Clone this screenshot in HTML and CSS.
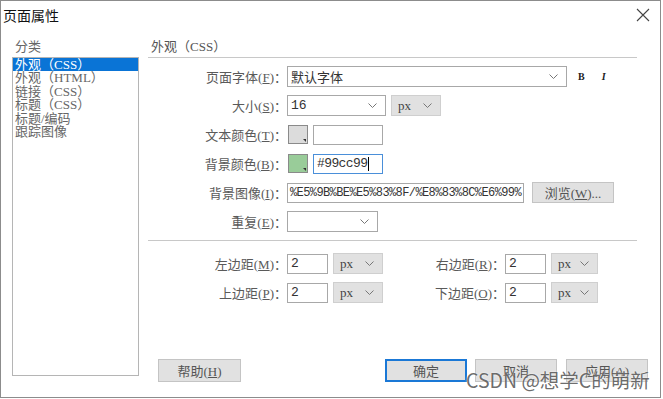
FILE: index.html
```html
<!DOCTYPE html>
<html lang="zh-CN">
<head>
    <meta charset="UTF-8">
    <meta name="viewport" content="width=device-width, initial-scale=1.0">
    <title>页面属性</title>
    <link rel="stylesheet" href="styles.css">
</head>
<body>
    <div class="dialog">
        <div class="titlebar">
            <span class="title">页面属性</span>
            <svg class="close" width="14" height="14" viewBox="0 0 14 14">
                <path d="M1 1 L13 13 M13 1 L1 13" stroke="#444" stroke-width="1.1" fill="none"/>
            </svg>
        </div>
        <div class="content">
            <div class="sidebar">
                <div class="side-title">分类</div>
                <ul class="category-list">
                    <li class="selected">外观（CSS）</li>
                    <li>外观（HTML）</li>
                    <li>链接（CSS）</li>
                    <li>标题（CSS）</li>
                    <li>标题/编码</li>
                    <li>跟踪图像</li>
                </ul>
            </div>
            <div class="main">
                <div class="section-title">外观（CSS）</div>
                <div class="form">
                    <div class="row">
                        <span class="label">页面字体(<u>F</u>)：</span>
                        <div class="select font-select">默认字体<svg class="chev" width="9" height="5"><polyline points="0.5,0.5 4.5,4.5 8.5,0.5" stroke="#777" fill="none"/></svg></div>
                        <span class="fmt fmt-b">B</span>
                        <span class="fmt fmt-i">I</span>
                    </div>
                    <div class="row">
                        <span class="label">大小(<u>S</u>)：</span>
                        <div class="select size-select">16<svg class="chev" width="9" height="5"><polyline points="0.5,0.5 4.5,4.5 8.5,0.5" stroke="#777" fill="none"/></svg></div>
                        <div class="unit">px<svg class="chev" width="9" height="5"><polyline points="0.5,0.5 4.5,4.5 8.5,0.5" stroke="#777" fill="none"/></svg></div>
                    </div>
                    <div class="row">
                        <span class="label">文本颜色(<u>T</u>)：</span>
                        <span class="swatch"></span>
                        <div class="input color-input"></div>
                    </div>
                    <div class="row">
                        <span class="label">背景颜色(<u>B</u>)：</span>
                        <span class="swatch green"></span>
                        <div class="input color-input focused">#99cc99<span class="caret"></span></div>
                    </div>
                    <div class="row">
                        <span class="label">背景图像(<u>I</u>)：</span>
                        <div class="input image-input">%E5%9B%BE%E5%83%8F/%E8%83%8C%E6%99%</div>
                        <button class="btn browse-btn">浏览(<u>W</u>)...</button>
                    </div>
                    <div class="row">
                        <span class="label">重复(<u>E</u>)：</span>
                        <div class="select repeat-select"><svg class="chev" width="9" height="5"><polyline points="0.5,0.5 4.5,4.5 8.5,0.5" stroke="#777" fill="none"/></svg></div>
                    </div>
                </div>
                <div class="divider"></div>
                <div class="margins">
                    <div class="row">
                        <span class="label">左边距(<u>M</u>)：</span>
                        <div class="input margin-input">2</div>
                        <div class="unit">px<svg class="chev" width="9" height="5"><polyline points="0.5,0.5 4.5,4.5 8.5,0.5" stroke="#777" fill="none"/></svg></div>
                        <span class="label label-right">右边距(<u>R</u>)：</span>
                        <div class="input margin-input">2</div>
                        <div class="unit unit-narrow">px<svg class="chev" width="9" height="5"><polyline points="0.5,0.5 4.5,4.5 8.5,0.5" stroke="#777" fill="none"/></svg></div>
                    </div>
                    <div class="row">
                        <span class="label">上边距(<u>P</u>)：</span>
                        <div class="input margin-input">2</div>
                        <div class="unit">px<svg class="chev" width="9" height="5"><polyline points="0.5,0.5 4.5,4.5 8.5,0.5" stroke="#777" fill="none"/></svg></div>
                        <span class="label label-right">下边距(<u>O</u>)：</span>
                        <div class="input margin-input">2</div>
                        <div class="unit unit-narrow">px<svg class="chev" width="9" height="5"><polyline points="0.5,0.5 4.5,4.5 8.5,0.5" stroke="#777" fill="none"/></svg></div>
                    </div>
                </div>
                <div class="buttons">
                    <button class="btn">帮助(<u>H</u>)</button>
                    <div class="button-group">
                        <button class="btn btn-default">确定</button>
                        <button class="btn">取消</button>
                        <button class="btn">应用(<u>A</u>)</button>
                    </div>
                </div>
            </div>
        </div>
        <div class="watermark">CSDN @想学C的萌新</div>
    </div>
</body>
</html>
```

FILE: styles.css
```css
body {
    margin: 0;
    padding: 0;
    background-color: #fff;
    font-family: "Liberation Serif", "Noto Sans CJK SC", serif;
    font-size: 13px;
    color: #555;
}

.dialog {
    position: relative;
    width: 661px;
    height: 398px;
    border: 1px solid #8c8c8c;
    box-sizing: border-box;
    background: #fff;
}

.titlebar {
    display: flex;
    justify-content: space-between;
    height: 33px;
}

.title {
    padding-left: 2px;
    font-family: "Noto Sans CJK SC", sans-serif;
    font-size: 14px;
    line-height: 28px;
    color: #111;
}

.close {
    margin: 7px 10px 0 0;
}

.content {
    display: flex;
    padding: 4px 0 0 11px;
}

.sidebar {
    width: 127px;
    margin-right: 9px;
}

.side-title {
    padding-left: 3px;
    line-height: 17px;
    margin-bottom: 2px;
    color: #666;
}

.category-list {
    list-style: none;
    margin: 0;
    padding: 0;
    height: 319px;
    border: 1px solid #b5b5b5;
    box-sizing: border-box;
}

.category-list li {
    padding-left: 2px;
    line-height: 13.4px;
    color: #666;
}

.category-list li.selected {
    background-color: #0a74d6;
    color: #fff;
}

.main {
    width: 500px;
}

.section-title {
    margin-right: 11px;
    padding: 0 0 2px 3px;
    line-height: 17px;
    border-bottom: 1px solid #c8c8c8;
}

.form {
    padding-top: 8px;
}

.row {
    display: flex;
    align-items: center;
    height: 21px;
    margin-bottom: 8px;
}

.label {
    width: 139px;
    text-align: right;
    color: #5a5a5a;
    flex-shrink: 0;
}

.label-right {
    width: 122px;
}

.select,
.input {
    display: flex;
    align-items: center;
    justify-content: space-between;
    height: 21px;
    padding: 0 8px 0 3px;
    border: 1px solid #a8a8a8;
    box-sizing: border-box;
    background: #fff;
    color: #333;
    font-family: "Liberation Mono", "Noto Sans CJK SC", monospace;
    font-size: 13px;
    white-space: nowrap;
    overflow: hidden;
}

.input {
    height: 20px;
    justify-content: flex-start;
    padding-right: 0;
}

.font-select {
    width: 280px;
    font-family: "Noto Sans CJK SC", sans-serif;
}

.size-select {
    width: 99px;
}

.repeat-select {
    width: 91px;
    justify-content: flex-end;
}

.unit {
    display: flex;
    align-items: center;
    justify-content: space-between;
    width: 50px;
    height: 21px;
    margin-left: 5px;
    padding: 0 8px 0 6px;
    background: #e1e1e1;
    border: 1px solid #cfcfcf;
    box-sizing: border-box;
    color: #444;
}

.unit-narrow {
    width: 47px;
}

.chev {
    flex-shrink: 0;
}

.fmt {
    font-family: "Liberation Serif", serif;
    font-weight: bold;
    font-size: 10px;
    color: #222;
}

.fmt-b {
    margin-left: 11px;
}

.fmt-i {
    margin-left: 17px;
    font-style: italic;
}

.swatch {
    position: relative;
    width: 20px;
    height: 19px;
    margin-left: 1px;
    border: 1px solid #8a8a8a;
    box-sizing: border-box;
    background: #dcdcdc;
}

.swatch.green {
    background: #99cc99;
}

.swatch::after {
    content: "";
    position: absolute;
    right: 1px;
    bottom: 1px;
    border-left: 3px solid transparent;
    border-top: 3px solid #333;
}

.color-input {
    width: 70px;
    margin-left: 5px;
}

.color-input.focused {
    border-color: #4a8fd9;
    letter-spacing: -0.6px;
}

.caret {
    width: 1px;
    height: 14px;
    margin-left: 1px;
    background: #000;
}

.image-input {
    width: 237px;
    padding-left: 2px;
    font-size: 12px;
    letter-spacing: -0.6px;
}

.btn {
    height: 23px;
    width: 82px;
    padding: 0;
    background: #e1e1e1;
    border: 1px solid #c4c4c4;
    box-sizing: border-box;
    font-family: "Liberation Serif", "Noto Sans CJK SC", serif;
    font-size: 13px;
    color: #555;
}

.browse-btn {
    height: 21px;
    margin-left: 8px;
}

.divider {
    margin: 1px 11px 0 0;
    border-top: 1px solid #c8c8c8;
}

.margins {
    padding-top: 12px;
}

.margin-input {
    width: 41px;
}

.buttons {
    display: flex;
    justify-content: space-between;
    margin-top: 56px;
    padding-left: 10px;
}

.buttons > .btn {
    width: 83px;
}

.button-group {
    display: flex;
    gap: 8px;
}

.button-group .btn:last-child {
    margin-left: 1px;
}

.btn-default {
    border: 1px solid #1a78d6;
    box-shadow: inset 0 0 0 1px #1a78d6;
}

.watermark {
    position: absolute;
    left: 465px;
    top: 366px;
    font-family: "Noto Sans CJK SC", sans-serif;
    font-size: 19.5px;
    line-height: 26px;
    color: rgba(70, 70, 70, 0.8);
    text-shadow: 0 0 2px #fff;
}
```
